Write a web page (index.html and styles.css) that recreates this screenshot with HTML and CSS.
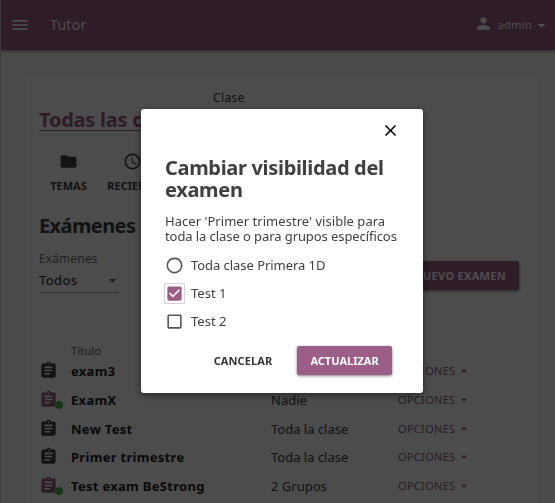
FILE: index.html
```html
<!DOCTYPE html>
<html lang="es">
<head>
<meta charset="utf-8">
<title>Tutor</title>
<link rel="stylesheet" href="styles.css">
</head>
<body>
<svg width="0" height="0" class="defs">
  <symbol id="assignment" viewBox="0 0 24 24"><path d="M19 3h-4.180C14.400 1.840 13.300 1 12 1s-2.400.84-2.820 2H5c-1.100 0-2 .9-2 2v14c0 1.100.9 2 2 2h14c1.100 0 2-.9 2-2V5c0-1.100-.9-2-2-2zm-7 0c.55 0 1 .45 1 1s-.45 1-1 1-1-.45-1-1 .45-1 1-1zm2 14H7v-2h7v2zm3-4H7v-2h10v2zm0-4H7V7h10v2z"/></symbol>
  <symbol id="arrow" viewBox="0 0 24 24"><path d="M7 10l5 5 5-5z"/></symbol>
</svg>
<div class="app">
  <header class="topbar">
    <svg class="menu" viewBox="0 0 24 24"><path d="M3 18h18v-2H3v2zm0-5h18v-2H3v2zm0-7v2h18V6H3z"/></svg>
    <span class="brand">Tutor</span>
    <div class="user">
      <svg class="person" viewBox="0 0 24 24"><path d="M12 12c2.210 0 4-1.790 4-4s-1.790-4-4-4-4 1.790-4 4 1.790 4 4 4zm0 2c-2.670 0-8 1.340-8 4v2h16v-2c0-2.660-5.330-4-8-4z"/></svg>
      <span>admin</span>
      <svg class="caret" viewBox="0 0 24 24"><path d="M7 10l5 5 5-5z"/></svg>
    </div>
  </header>
  <main class="card">
    <p class="clase">Clase</p>
    <h1 class="class-title">Todas las clases</h1>
    <nav class="tabs">
      <a class="tab"><svg viewBox="0 0 24 24"><path d="M10 4H4c-1.100 0-1.990.9-1.990 2L2 18c0 1.100.9 2 2 2h16c1.100 0 2-.9 2-2V8c0-1.100-.9-2-2-2h-8l-2-2z"/></svg>TEMAS</a>
      <a class="tab"><svg viewBox="0 0 24 24"><path d="M11.990 2C6.470 2 2 6.480 2 12s4.470 10 9.990 10C17.520 22 22 17.520 22 12S17.520 2 11.990 2zM12 20c-4.420 0-8-3.580-8-8s3.580-8 8-8 8 3.580 8 8-3.580 8-8 8zm.5-13H11v6l5.250 3.150.75-1.230-4.500-2.670z"/></svg>RECIENTE</a>
    </nav>
    <h2 class="section">Exámenes</h2>
    <div class="toolbar">
      <div class="filter">
        <span class="filter-label">Exámenes</span>
        <div class="select">Todos<svg><use href="#arrow"/></svg></div>
      </div>
      <button class="new">NUEVO EXAMEN</button>
    </div>
    <div class="table">
      <div class="head">Título</div>
      <div class="row"><span class="icon"><svg><use href="#assignment"/></svg></span><b>exam3</b><span>Nadie</span><span class="options">OPCIONES<svg><use href="#arrow"/></svg></span></div>
      <div class="row"><span class="icon active"><svg><use href="#assignment"/></svg></span><b>ExamX</b><span>Nadie</span><span class="options">OPCIONES<svg><use href="#arrow"/></svg></span></div>
      <div class="row"><span class="icon"><svg><use href="#assignment"/></svg></span><b>New Test</b><span>Toda la clase</span><span class="options">OPCIONES<svg><use href="#arrow"/></svg></span></div>
      <div class="row"><span class="icon"><svg><use href="#assignment"/></svg></span><b>Primer trimestre</b><span>Toda la clase</span><span class="options">OPCIONES<svg><use href="#arrow"/></svg></span></div>
      <div class="row"><span class="icon active"><svg><use href="#assignment"/></svg></span><b>Test exam BeStrong</b><span>2 Grupos</span><span class="options">OPCIONES<svg><use href="#arrow"/></svg></span></div>
    </div>
  </main>
</div>
<div class="overlay">
  <section class="modal">
    <svg class="close" viewBox="0 0 24 24"><path d="M19 6.410L17.590 5 12 10.590 6.410 5 5 6.410 10.590 12 5 17.590 6.410 19 12 13.410 17.590 19 19 17.590 13.410 12z"/></svg>
    <h2>Cambiar visibilidad del<br>examen</h2>
    <p>Hacer 'Primer trimestre' visible para<br><span class="line2">toda la clase o para grupos específicos</span></p>
    <div class="choices">
      <label class="choice"><span class="box"><svg viewBox="0 0 24 24"><path d="M12 2C6.480 2 2 6.480 2 12s4.480 10 10 10 10-4.480 10-10S17.520 2 12 2zm0 18c-4.420 0-8-3.580-8-8s3.580-8 8-8 8 3.580 8 8-3.580 8-8 8z"/></svg></span><span class="long">Toda clase Primera 1D</span></label>
      <label class="choice checked"><span class="box"><svg viewBox="0 0 24 24"><path d="M19 3H5c-1.110 0-2 .9-2 2v14c0 1.100.89 2 2 2h14c1.110 0 2-.9 2-2V5c0-1.100-.89-2-2-2zm-9 14l-5-5 1.410-1.410L10 14.170l7.590-7.590L19 8l-9 9z"/></svg></span><span>Test 1</span></label>
      <label class="choice"><span class="box"><svg viewBox="0 0 24 24"><path d="M19 5v14H5V5h14m0-2H5c-1.100 0-2 .9-2 2v14c0 1.100.9 2 2 2h14c1.100 0 2-.9 2-2V5c0-1.100-.9-2-2-2z"/></svg></span><span>Test 2</span></label>
    </div>
    <div class="actions">
      <button class="cancel">CANCELAR</button>
      <button class="submit">ACTUALIZAR</button>
    </div>
  </section>
</div>
</body>
</html>
```
FILE: styles.css
```css
* { box-sizing: border-box; }
body { margin: 0; font: 13px/18px "Noto Sans", sans-serif; color: #404040; overflow: hidden; }
h1, h2, p { margin: 0; }
svg { fill: currentColor; flex: none; }
button { border: 0; padding: 0; font: 700 11px/29px "Noto Sans", sans-serif; border-radius: 2px; white-space: nowrap; }
.defs { position: absolute; }

.app { height: 503px; overflow: hidden; background: #f7f7f7; border-left: 1px solid #ccc; }
.topbar { display: flex; align-items: center; height: 50px; padding: 0 4px 0 9px; background: #9b5f87; color: #fff; box-shadow: 0 1px 3px rgba(0,0,0,.5); }
.menu { width: 20px; height: 20px; }
.brand { margin-left: 20px; font-size: 14px; letter-spacing: .3px; }
.user { display: flex; align-items: center; margin-left: auto; font-size: 11px; letter-spacing: .3px; }
.person { width: 19px; height: 19px; margin: -3px 5px 0 0; }
.caret { width: 19px; height: 19px; }

.card { width: 511px; height: 440px; margin: 26px 0 0 25px; padding: 13px 18px 0 13px; background: #fdfdfd; }
.clase { margin-left: 174px; font-size: 12px; line-height: 18px; letter-spacing: .4px; }
.class-title { font-size: 20px; line-height: 26px; letter-spacing: -.25px; color: #9b5f87; text-decoration: underline; text-decoration-thickness: 1px; text-underline-offset: 3px; }
.tabs { display: flex; margin-top: 19px; }
.tab { display: flex; flex-direction: column; align-items: center; width: 59px; font-size: 11px; font-weight: 700; line-height: 16px; gap: 7px; }
.tab + .tab { width: 71px; }
.tab svg { width: 19px; height: 19px; }
.tab + .tab svg { margin-right: 2px; }
.section { margin-top: 18px; font-size: 20px; line-height: 28px; letter-spacing: -.6px; }
.toolbar { display: flex; justify-content: space-between; margin-top: 10px; }
.filter { width: 80px; }
.filter-label { display: block; font-size: 12px; line-height: 18px; letter-spacing: .1px; color: #777; }
.select { display: flex; justify-content: space-between; align-items: center; height: 25px; border-bottom: 1px solid #aaa; letter-spacing: .4px; color: #222; }
.select svg { width: 17px; height: 17px; margin-right: -2px; color: #666; }
.new { width: 122px; height: 29px; margin-top: 11px; padding-right: 13px; background: #9b5f87; color: #fff; letter-spacing: .3px; text-align: right; box-shadow: 0 1px 3px rgba(0,0,0,.5); }

.table { margin-top: 50px; }
.head { margin-left: 32px; font-size: 11px; line-height: 16px; height: 14px; letter-spacing: .2px; color: #666; }
.row { display: grid; grid-template-columns: 32px 200px 127px 1fr; align-items: center; height: 28.700px; letter-spacing: 0; white-space: nowrap; }
.row:nth-child(n+4) { margin-top: -.2px; }
.row b { color: #222; letter-spacing: .3px; }
.icon { position: relative; height: 20px; }
.icon svg { width: 19px; height: 19px; }
.active { color: #9b5f87; }
.active::after { content: ""; position: absolute; left: 16px; top: 11px; width: 8px; height: 8px; border-radius: 50%; background: #4caf50; }
.options { display: flex; align-items: center; color: #9b5f87; font-size: 11px; letter-spacing: .3px; }
.options svg { width: 14px; height: 14px; margin-left: 2px; }

.overlay { position: fixed; inset: 0; display: flex; justify-content: center; align-items: flex-start; padding: 109px 0 0 9px; background: rgba(0,0,0,.7); }
.modal { display: flex; flex-direction: column; width: 282px; height: 284px; padding: 12px 24px 17px; background: #fff; border-radius: 3px; box-shadow: 0 2px 8px rgba(0,0,0,.5); white-space: nowrap; }
.close { align-self: flex-end; width: 19px; height: 19px; margin-right: -1px; color: #000; }
.modal h2 { margin-top: 17px; font-size: 20px; line-height: 22px; letter-spacing: -.32px; }
.modal p { margin-top: 13px; line-height: 15px; letter-spacing: .04px; }
.line2 { letter-spacing: -.08px; }
.choices { margin-top: 7px; }
.choice { display: flex; align-items: center; height: 28px; gap: 6px; margin-left: -1px; }
.long { letter-spacing: -.05px; }
.box { display: flex; align-items: center; justify-content: center; width: 21px; height: 21px; border: 1px solid transparent; color: #555; }
.box svg { width: 19px; height: 19px; }
.checked .box { border-color: #e1cadb; color: #9b5f87; }
.actions { display: flex; justify-content: flex-end; margin: 11px 7px 0 0; }
.cancel { width: 84px; margin-right: 12px; background: none; color: #333; letter-spacing: .1px; }
.submit { width: 95px; height: 29px; background: #9b5f87; color: #fff; box-shadow: 0 1px 3px rgba(0,0,0,.5); }
```
